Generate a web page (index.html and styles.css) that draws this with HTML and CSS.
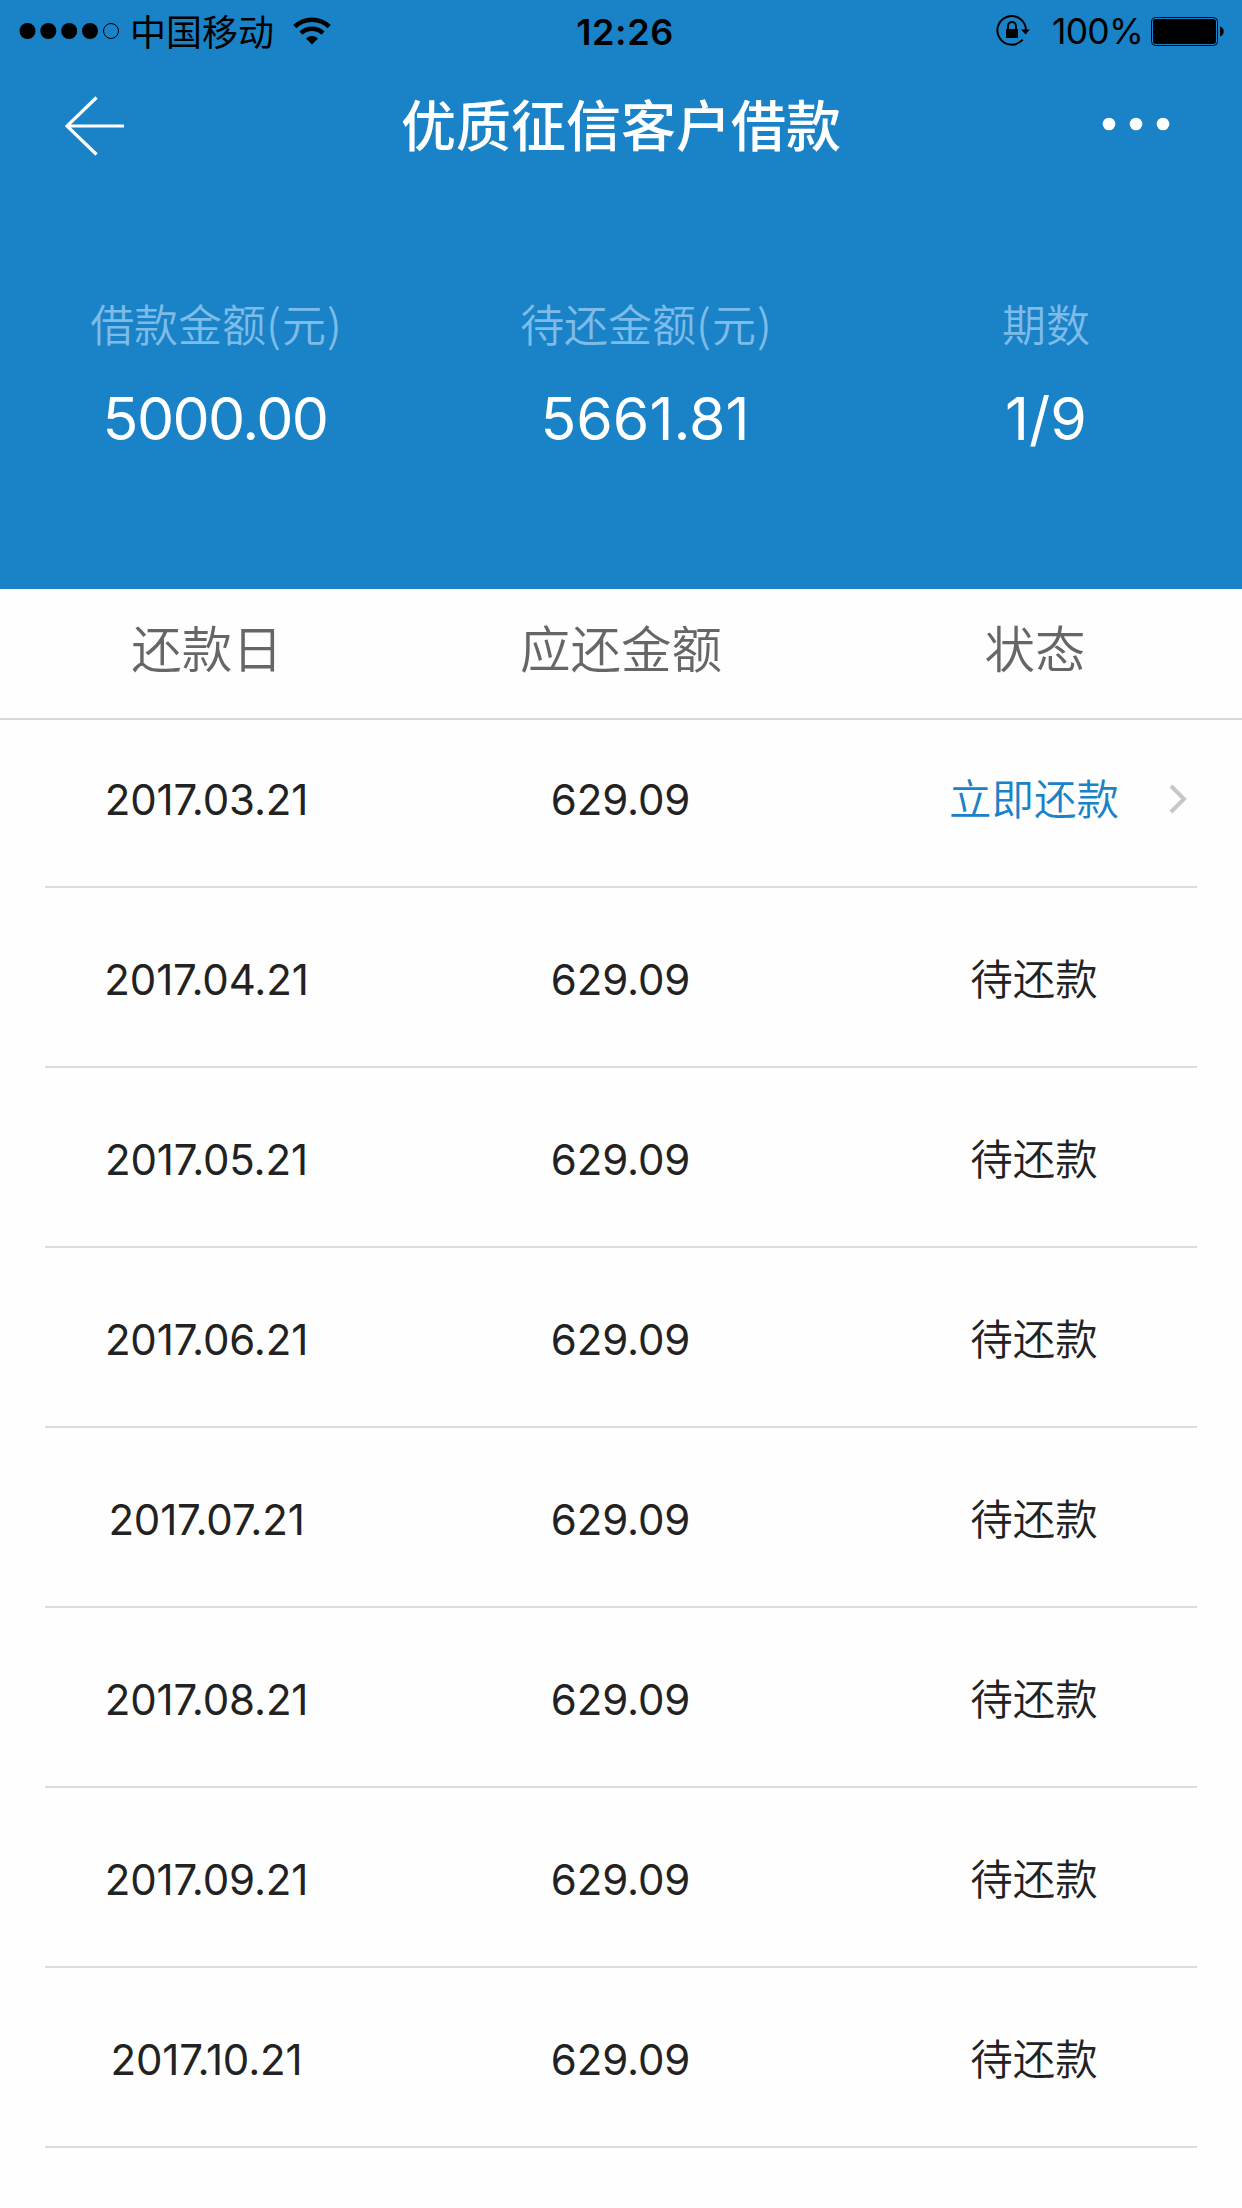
FILE: index.html
```html
<!DOCTYPE html>
<html lang="zh-CN">
<head>
<meta charset="utf-8">
<title>优质征信客户借款</title>
<link rel="stylesheet" href="styles.css">
</head>
<body>
<header class="hero">
  <div class="status-bar">
    <div class="status-left">
      <svg class="signal" width="101" height="18" viewBox="0 0 101 18"><circle cx="8.5" cy="9" r="8"/><circle cx="29.3" cy="9" r="8"/><circle cx="50.2" cy="9" r="8"/><circle cx="71" cy="9" r="8"/><circle cx="92" cy="9" r="7.5" fill="none" stroke="#000" stroke-width="1"/></svg>
      <span class="carrier">中国移动</span>
      <svg class="wifi" width="38" height="28" viewBox="0 0 38 28"><g fill="none" stroke="#000" stroke-width="4.6"><path d="M1.8 9.7a24.7 24.7 0 0 1 34.4 0"/><path d="M8 16.2a16 16 0 0 1 22 0"/></g><path d="M19 27.4l-6-6a8.5 8.5 0 0 1 12 0z"/></svg>
    </div>
    <span class="clock">12:26</span>
    <div class="status-right">
      <svg class="lock" width="36" height="32" viewBox="0 0 36 32"><path d="M26.6 24.6A14.3 14.3 0 1 1 30 15" fill="none" stroke="#000" stroke-width="2"/><path d="M25 14.5h9l-4.5 5z"/><path d="M10 14h12v9H10z"/><path d="M12 14v-3a4 4 0 0 1 8 0v3" fill="none" stroke="#000" stroke-width="2"/></svg>
      <span class="percent">100%</span>
      <svg class="battery" width="74" height="29" viewBox="0 0 74 29"><rect x=".5" y=".5" width="66" height="28" rx="4" fill="none" stroke="#000"/><rect x="2" y="2" width="63" height="25" rx="3"/><path d="M69 9.5c5 1.5 5 8.500 0 10z"/></svg>
    </div>
  </div>
  <nav class="nav-bar">
    <svg class="back" width="60" height="62" viewBox="0 0 60 62"><path d="M31.500 2.500L2 31l29.500 28.500M2 31h57" fill="none" stroke="#fff" stroke-width="3.200"/></svg>
    <h1 class="title">优质征信客户借款</h1>
    <svg class="more" width="68" height="14" viewBox="0 0 68 14" fill="#fff"><circle cx="7" cy="7" r="6.300"/><circle cx="34" cy="7" r="6.300"/><circle cx="61" cy="7" r="6.300"/></svg>
  </nav>
  <dl class="summary">
    <div class="metric metric-total"><dt>借款金额<span class="unit">(元)</span></dt><dd>5000.00</dd></div>
    <div class="metric"><dt>待还金额<span class="unit">(元)</span></dt><dd>5661.81</dd></div>
    <div class="metric"><dt>期数</dt><dd>1/9</dd></div>
  </dl>
</header>
<main class="plan">
  <div class="plan-head"><span>还款日</span><span>应还金额</span><span>状态</span></div>
  <div class="row row-due"><span class="num">2017.03.21</span><span class="num">629.09</span><span class="state pay">立即还款</span>
    <svg class="chevron" width="18" height="32" viewBox="0 0 18 32"><path d="M2 3l13 13L2 29" fill="none" stroke="#c7c7c7" stroke-width="4"/></svg></div>
  <div class="row"><span class="num">2017.04.21</span><span class="num">629.09</span><span class="state">待还款</span></div>
  <div class="row"><span class="num">2017.05.21</span><span class="num">629.09</span><span class="state">待还款</span></div>
  <div class="row"><span class="num">2017.06.21</span><span class="num">629.09</span><span class="state">待还款</span></div>
  <div class="row"><span class="num">2017.07.21</span><span class="num">629.09</span><span class="state">待还款</span></div>
  <div class="row"><span class="num">2017.08.21</span><span class="num">629.09</span><span class="state">待还款</span></div>
  <div class="row"><span class="num">2017.09.21</span><span class="num">629.09</span><span class="state">待还款</span></div>
  <div class="row"><span class="num">2017.10.21</span><span class="num">629.09</span><span class="state">待还款</span></div>
</main>
</body>
</html>
```
FILE: styles.css
```css
* { box-sizing: border-box; }
body {
  margin: 0;
  height: 2208px;
  overflow: hidden;
  background: #fefefe;
  color: #222;
  font-family: Inter, "Noto Sans CJK SC", sans-serif;
}
svg { display: block; flex: none; }
.hero { height: 589px; background: #1a82c6; color: #fff; }

.status-bar {
  display: grid;
  grid-template-columns: 1fr auto 1fr;
  align-items: center;
  height: 60px;
  padding: 0 17px 0 19px;
  color: #000;
}
.status-left, .status-right { display: flex; align-items: center; height: 60px; }
.status-right { justify-content: flex-end; }
.carrier {
  margin-left: 10px;
  padding-bottom: 1px;
  font: 36px/59px "Noto Sans CJK SC", sans-serif;
}
.wifi { margin: 0 0 1px 19px; }
.clock { padding: 2px 0 0 6px; font-size: 36px; font-weight: 600; letter-spacing: .6px; line-height: 60px; }
.lock { margin-right: 20px; }
.percent { padding-top: 2px; margin-right: 8px; font-size: 35.500px; letter-spacing: -.8px; line-height: 60px; }

.nav-bar {
  display: grid;
  grid-template-columns: 1fr auto 1fr;
  align-items: center;
  height: 132px;
  padding: 0 72px 0 65px;
}
.title {
  margin: 0;
  padding: 0 0 7px 7px;
  font: 500 55px/125px "Noto Sans CJK SC", sans-serif;
}
.more { justify-self: end; margin-bottom: 4px; }

.summary {
  display: grid;
  grid-template-columns: 430px 430px 372px;
  margin: 0;
  padding-top: 101px;
  text-align: center;
}
.metric dt {
  color: #7dbbe8;
  font: 350 44px/60px "Noto Sans CJK SC", sans-serif;
}
.metric dd { margin: 30px 0 0; font-size: 59px; line-height: 72px; }
.metric-total dd { letter-spacing: -1.600px; }
.unit { margin-right: -3px; letter-spacing: 1.200px; }

.plan-head, .row {
  display: grid;
  grid-template-columns: repeat(3, 1fr);
  align-items: center;
  text-align: center;
}
.plan-head {
  height: 131px;
  padding-bottom: 16px;
  border-bottom: 2px solid #d9d9d9;
  color: #666;
  font: 350 50.500px "Noto Sans CJK SC", sans-serif;
}
.row {
  position: relative;
  height: 180px;
  margin: 0 45px;
  padding-top: 5px;
  grid-template-columns: 324px 1fr 324px;
  border-bottom: 2px solid #dcdcdc;
}
.row-due { height: 168px; padding: 0 0 8px; }
.num { padding-right: 1px; font-size: 42px; letter-spacing: -.15px; }
.state {
  padding: 0 2px 5px 0;
  font: 350 42.500px/60px "Noto Sans CJK SC", sans-serif;
}
.pay { color: #1a82c6; }
.chevron { position: absolute; right: 10px; top: 63px; }
```
